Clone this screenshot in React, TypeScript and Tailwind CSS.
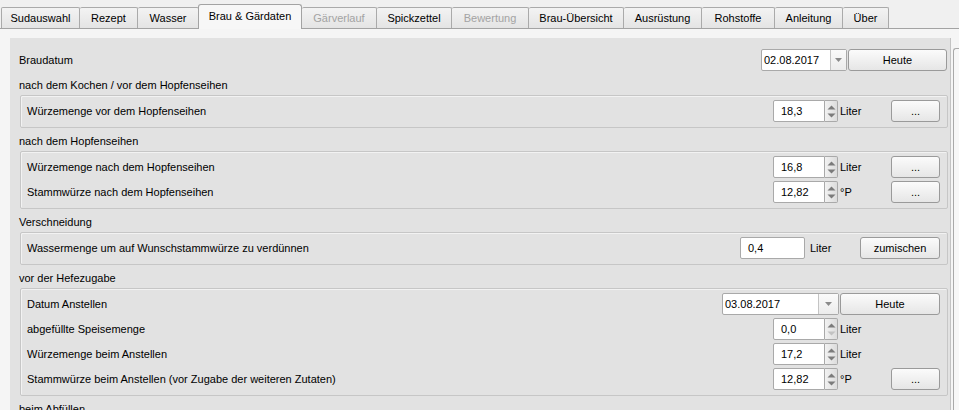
import type { ReactNode } from 'react';

const tabs = [
  { label: 'Sudauswahl', w: 'w-[79px]' },
  { label: 'Rezept', w: 'w-[58px]' },
  { label: 'Wasser', w: 'w-[61px]' },
  { label: 'Brau & Gärdaten', w: 'w-[104px]', active: true },
  { label: 'Gärverlauf', w: 'w-[75px]', disabled: true },
  { label: 'Spickzettel', w: 'w-[75px]' },
  { label: 'Bewertung', w: 'w-[77px]', disabled: true },
  { label: 'Brau-Übersicht', w: 'w-[95px]' },
  { label: 'Ausrüstung', w: 'w-[78px]' },
  { label: 'Rohstoffe', w: 'w-[73px]' },
  { label: 'Anleitung', w: 'w-[68px]' },
  { label: 'Über', w: 'w-[46px]' },
];

function TabBar() {
  return (
    <div className="flex h-[29px] items-end border-b border-[#a3a3a3] pl-[1px]">
      {tabs.map((t, i) =>
        t.active ? (
          <div
            key={t.label}
            className={`${t.w} relative z-10 -mb-px -ml-px flex h-[25px] items-center justify-center rounded-t-[3px] border-x border-t border-[#a3a3a3] bg-[#f7f7f7] pb-[1px] text-black`}
          >
            {t.label}
          </div>
        ) : (
          <div
            key={t.label}
            className={`${t.w} flex h-[21px] items-center justify-center rounded-t-[2px] border-t border-r border-[#aaaaaa] bg-gradient-to-b from-[#f3f3f3] to-[#e4e4e4] pt-[1px] ${i === 0 ? 'border-l' : ''} ${t.disabled ? 'text-[#a3a3a3]' : 'text-black'}`}
          >
            {t.label}
          </div>
        )
      )}
    </div>
  );
}

function Button({ children, w }: { children: ReactNode; w: string }) {
  return (
    <div
      className={`${w} flex h-[22px] items-center justify-center rounded-[3px] border border-[#9a9a9a] bg-gradient-to-b from-[#fbfbfb] to-[#e6e6e6] text-black`}
    >
      {children}
    </div>
  );
}

function SpinBox({ value, downOff }: { value: string; downOff?: boolean }) {
  return (
    <div className="flex h-[22px] w-[65px]">
      <div className="flex flex-1 items-center rounded-l-[2px] border border-[#a9a9a9] bg-white pl-[7px]">{value}</div>
      <div className="flex w-[13px] flex-col items-center justify-center gap-[3px] rounded-r-[2px] border border-l-0 border-[#a9a9a9] bg-gradient-to-r from-[#f2f2f2] to-[#dcdcdc]">
        <svg width="9" height="5" viewBox="0 0 9 5">
          <path d="M0.5 4.5 L4.5 0.5 L8.5 4.5 Z" fill="#7b7b7b" />
        </svg>
        <svg width="9" height="5" viewBox="0 0 9 5">
          <path d="M0.5 0.5 L4.5 4.5 L8.5 0.5 Z" fill={downOff ? '#c2c2c2' : '#7b7b7b'} />
        </svg>
      </div>
    </div>
  );
}

function DateBox({ value, w, btn }: { value: string; w: string; btn: string }) {
  return (
    <div className={`${w} flex h-[22px] rounded-[2px] border border-[#a9a9a9] bg-white`}>
      <div className="flex flex-1 items-center pl-[2px]">{value}</div>
      <div className={`${btn} flex items-center justify-center border-l border-[#c4c4c4] bg-gradient-to-b from-[#fafafa] to-[#ececec]`}>
        <svg width="7" height="4" viewBox="0 0 7 4">
          <path d="M0 0 L7 0 L3.5 4 Z" fill="#8a8a8a" />
        </svg>
      </div>
    </div>
  );
}

function Unit({ children, w }: { children: ReactNode; w: string }) {
  return <div className={`${w} flex items-center pl-[2px]`}>{children}</div>;
}

function Group({ children }: { children: ReactNode }) {
  return (
    <div className="ml-[1px] flex flex-col gap-[3px] rounded-[2px] border border-[#c6c6c6] pt-[4px] pr-[7px] pb-[5px] pl-[6px] shadow-[inset_1px_1px_0_#f2f2f2]">
      {children}
    </div>
  );
}

function Row({ label, children }: { label: string; children: ReactNode }) {
  return (
    <div className="flex h-[22px] items-center">
      <div className="flex-1">{label}</div>
      <div className="flex h-[22px]">{children}</div>
    </div>
  );
}

function Section({ children }: { children: ReactNode }) {
  return <div className="mt-[6px] mb-[3px] h-[14px] leading-[14px]">{children}</div>;
}

function Dots() {
  return <Button w="w-[49px]">...</Button>;
}

export default function App() {
  return (
    <div className="h-[410px] w-[959px] overflow-hidden bg-[#f0f0f0] font-['Liberation_Sans',Arial,sans-serif] text-[11px] text-black">
      <TabBar />
      <div className="flex h-[381px] bg-[#f5f5f5] pt-[9px] pl-[10px]">
        <div className="flex w-[941px] flex-col border-r border-[#c3c3c3] bg-[#e2e2e2] pt-[11px] pr-[2px] pl-[9px]">
          <div className="flex h-[22px] items-center pr-[1px]">
            <div className="flex-1">Braudatum</div>
            <DateBox value="02.08.2017" w="w-[86px]" btn="w-[16px]" />
            <div className="ml-[1px]">
              <Button w="w-[99px]">Heute</Button>
            </div>
          </div>

          <div className="mt-[7px] mb-[3px] h-[14px] leading-[14px]">nach dem Kochen / vor dem Hopfenseihen</div>
          <Group>
            <Row label="Würzemenge vor dem Hopfenseihen">
              <SpinBox value="18,3" />
              <Unit w="w-[53px]">Liter</Unit>
              <Dots />
            </Row>
          </Group>

          <Section>nach dem Hopfenseihen</Section>
          <Group>
            <Row label="Würzemenge nach dem Hopfenseihen">
              <SpinBox value="16,8" />
              <Unit w="w-[53px]">Liter</Unit>
              <Dots />
            </Row>
            <Row label="Stammwürze nach dem Hopfenseihen">
              <SpinBox value="12,82" />
              <Unit w="w-[53px]">°P</Unit>
              <Dots />
            </Row>
          </Group>

          <Section>Verschneidung</Section>
          <Group>
            <Row label="Wassermenge um auf Wunschstammwürze zu verdünnen">
              <div className="flex w-[65px] items-center rounded-[2px] border border-[#a9a9a9] bg-white pl-[7px]">0,4</div>
              <div className="flex w-[55px] items-center pl-[5px]">Liter</div>
              <Button w="w-[80px]">zumischen</Button>
            </Row>
          </Group>

          <Section>vor der Hefezugabe</Section>
          <Group>
            <Row label="Datum Anstellen">
              <DateBox value="03.08.2017" w="w-[117px]" btn="w-[20px]" />
              <div className="ml-[1px]">
                <Button w="w-[100px]">Heute</Button>
              </div>
            </Row>
            <Row label="abgefüllte Speisemenge">
              <SpinBox value="0,0" downOff />
              <Unit w="w-[53px]">Liter</Unit>
              <div className="w-[49px]" />
            </Row>
            <Row label="Würzemenge beim Anstellen">
              <SpinBox value="17,2" />
              <Unit w="w-[53px]">Liter</Unit>
              <div className="w-[49px]" />
            </Row>
            <Row label="Stammwürze beim Anstellen (vor Zugabe der weiteren Zutaten)">
              <SpinBox value="12,82" />
              <Unit w="w-[53px]">°P</Unit>
              <Dots />
            </Row>
          </Group>

          <Section>beim Abfüllen</Section>
        </div>
        <div className="mt-[10px] ml-[2px] flex-1 rounded-tl-[3px] border-t border-l border-[#a9a9a9] bg-[#f7f7f7]" />
      </div>
    </div>
  );
}
